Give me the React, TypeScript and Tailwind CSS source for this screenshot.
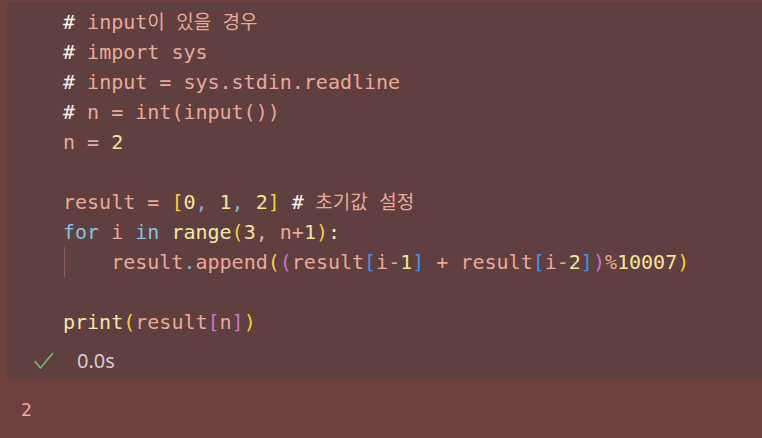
type Tok = [string, string];

const C = {
  txt: 'text-[#eaa898]',
  hash: 'text-[#f6f2f0]',
  num: 'text-[#f5e49a]',
  kw: 'text-[#88c0de]',
  fn: 'text-[#f2e8a8]',
  b1: 'text-[#f5cf3a]',
  b2: 'text-[#c874c8]',
  b3: 'text-[#4096e6]',
  punc: 'text-[#80b4d6]',
};

const lines: Tok[][] = [
  [['#', C.hash], [' input', C.txt], ['이 있을 경우', C.txt + ' text-[19px]']],
  [['#', C.hash], [' import sys', C.txt]],
  [['#', C.hash], [' input = sys.stdin.readline', C.txt]],
  [['#', C.hash], [' n = int(input())', C.txt]],
  [['n = ', C.txt], ['2', C.num]],
  [],
  [
    ['result = ', C.txt], ['[', C.b1], ['0', C.num], [',', C.punc], [' ', C.txt], ['1', C.num],
    [',', C.punc], [' ', C.txt], ['2', C.num], [']', C.b1], [' ', C.txt], ['#', C.hash],
    [' 초기값 설정', C.txt + ' text-[19px]'],
  ],
  [
    ['for', C.kw], [' i ', C.txt], ['in', C.kw], [' ', C.txt], ['range', C.fn], ['(', C.b1], ['3', C.num],
    [', n+', C.txt], ['1', C.num], [')', C.b1], [':', C.fn],
  ],
  [
    ['    result', C.txt], ['.', C.punc], ['append', C.txt], ['(', C.b1], ['(', C.b2], ['result', C.txt],
    ['[', C.b3], ['i-', C.txt], ['1', C.num], [']', C.b3], [' + result', C.txt], ['[', C.b3], ['i-', C.txt],
    ['2', C.num], [']', C.b3], [')', C.b2], ['%', C.txt], ['10007', C.num], [')', C.b1],
  ],
  [],
  [['print', C.fn], ['(', C.b1], ['result', C.txt], ['[', C.b2], ['n', C.txt], [']', C.b2], [')', C.b1]],
];

export default function App() {
  return (
    <div className="w-[762px] h-[438px] bg-[#6e403e] overflow-hidden">
      {/* Code cell */}
      <div className="ml-[7px] mt-[2px] h-[377px] bg-[#5f3f3f] pt-[5px]">
        <pre
          className="pl-[56px] text-[20px] leading-[30px] whitespace-pre"
          style={{ fontFamily: '"DejaVu Sans Mono", "Noto Sans CJK KR", monospace' }}
        >
          {lines.map((line, i) => (
            <div key={i} className="relative h-[30px]">
              {i === 8 && <span className="absolute left-[1px] top-0 h-[30px] w-px bg-[#8c5c56]" />}
              {line.map(([t, c], j) => (
                <span key={j} className={c}>
                  {t}
                </span>
              ))}
            </div>
          ))}
        </pre>

        {/* Status */}
        <div className="flex items-center mt-[12px] pl-[27px] h-[24px]">
          <svg width="20" height="18" viewBox="0 0 20 18" fill="none" stroke="#72c070" strokeWidth="1.5">
            <path d="M1 9.5 L6.5 16 L18.5 1.5" strokeLinecap="round" strokeLinejoin="round" />
          </svg>
          <span
            className="ml-[23px] text-[20px] text-[#d6cfcc]"
            style={{ fontFamily: '"Noto Sans", sans-serif' }}
          >
            0.0s
          </span>
        </div>
      </div>

      {/* Output */}
      <div
        className="pl-[21px] pt-[17px] text-[18px] text-[#f0b0a0]"
        style={{ fontFamily: '"DejaVu Sans Mono", monospace' }}
      >
        2
      </div>
    </div>
  );
}
